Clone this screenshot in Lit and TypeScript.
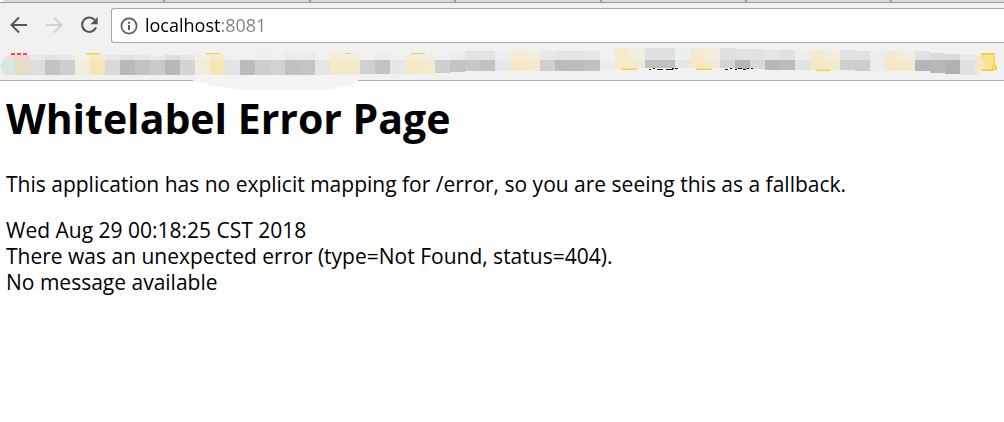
import { LitElement, html, svg, css } from "lit";
import { customElement } from "lit/decorators.js";

// [x, top edge, bottom edge, upper colour, lower colour]; each tile is 15 wide
type Tile = [number, number, number, string, string];

const TILES: Tile[] = [
  [0, 55, 75, "#f0dfdd", "#d9e8de"],
  [15, 55, 75, "#f2d6d5", "#e5dcc4"],
  [30, 55, 75, "#eaeaea", "#dddddb"],
  [45, 55, 75, "#e3e3e3", "#c3c3c1"],
  [60, 55, 75, "#e7e9e9", "#cccfce"],
  [75, 55, 75, "#f3f0e6", "#f2eddb"],
  [90, 55, 75, "#f4ebcd", "#f5e7b3"],
  [105, 55, 75, "#e9e9e8", "#dadad8"],
  [120, 55, 75, "#e3e3e3", "#b8b9b8"],
  [135, 55, 75, "#e6e7e6", "#c2c4c2"],
  [150, 56, 75, "#e9e8e7", "#cccac7"],
  [165, 55, 75, "#dddedf", "#b4b9ba"],
  [180, 55, 75, "#e4e7e8", "#d3d5d4"],
  [195, 55, 75, "#f2efe3", "#f2ecda"],
  [210, 54, 75, "#f4ebcd", "#f5e6b3"],
  [225, 55, 75, "#f0f0f0", "#e4e2e2"],
  [240, 55, 75, "#f0f0f0", "#bfbbbc"],
  [255, 53, 75, "#eeefee", "#cdcfcd"],
  [270, 55, 75, "#f0f0f0", "#d1d3d2"],
  [285, 52, 75, "#ececec", "#c1c1c0"],
  [300, 52, 75, "#ebebea", "#c5c4c1"],
  [315, 55, 75, "#f0f0f0", "#e5e5e5"],
  [330, 52, 75, "#f3edd6", "#f3ebc8"],
  [345, 54, 75, "#f2efde", "#f1e9c9"],
  [360, 55, 74, "#f0f0f0", "#d0d0cf"],
  [375, 54, 74, "#ededee", "#c3c3c1"],
  [390, 55, 74, "#f0f0f0", "#e5e8ea"],
  [405, 54, 74, "#f4edd6", "#f6e8c4"],
  [420, 54, 74, "#f1eedf", "#f1ebd0"],
  [435, 55, 73, "#f0f0f0", "#cfcfcf"],
  [450, 52, 72, "#ebebec", "#c3c3c1"],
  [465, 51, 71, "#e2e3e2", "#c5c8c4"],
  [480, 51, 71, "#e3e3e3", "#c2c3bf"],
  [495, 51, 71, "#ecedee", "#e4e6e8"],
  [510, 51, 71, "#f4ebd1", "#f6e8c3"],
  [525, 51, 71, "#f1eedd", "#f2ebcd"],
  [540, 51, 71, "#e9e9e9", "#d4cfcb"],
  [555, 51, 71, "#e4e4e5", "#b9bbbd"],
  [570, 51, 71, "#e4e4e3", "#babebb"],
  [585, 51, 71, "#e6e6e8", "#c1c0c5"],
  [600, 60, 70, "#f0f0f0", "#ececec"],
  [615, 48, 69, "#f4ead0", "#f6e9c4"],
  [630, 48, 68, "#f1eedd", "#f2ead0"],
  [645, 48, 68, "#e0e0e0", "#bfc1bd"],
  [660, 48, 68, "#e0e0e0", "#bfc1bd"],
  [675, 48, 68, "#ecefef", "#e3e5e6"],
  [690, 48, 68, "#f4ead0", "#f6e8c3"],
  [705, 48, 68, "#f1eedc", "#f2ead0"],
  [720, 48, 68, "#e0e0e0", "#d4d4d4"],
  [735, 49, 69, "#e1e1e1", "#b4b6b0"],
  [750, 49, 69, "#e2e2e2", "#d8d8d8"],
  [765, 50, 70, "#e5e5e2", "#b6b6b5"],
  [780, 50, 70, "#e1e1e1", "#bbbbba"],
  [795, 50, 70, "#ebedee", "#e0e2e5"],
  [810, 50, 70, "#f4ead0", "#f6e8c4"],
  [825, 50, 70, "#f1eedd", "#f2ead0"],
  [840, 50, 70, "#e3e3e3", "#cececd"],
  [855, 51, 71, "#e1e1e0", "#cdcdcb"],
  [870, 51, 71, "#ebedee", "#eaecee"],
  [885, 51, 71, "#f4ead0", "#f6e8c3"],
  [900, 51, 71, "#f1eedd", "#f2ead0"],
  [915, 51, 71, "#e0e1e2", "#b7b4b5"],
  [930, 53, 73, "#dcdcdd", "#b8b8b8"],
  [945, 54, 74, "#dadada", "#b2b0b5"],
  [960, 55, 75, "#eaeaea", "#dfe1e6"],
];

const RED_MARKS = [11, 17, 23];
// [x, y, width] of the folder edges that show beside the tiles
const FOLDER_TOPS = [[86, 53, 14], [206, 53, 14], [344, 53, 7], [411, 53, 14]];
const FOLDER_BASES = [[621, 68, 16], [696, 68, 16], [816, 69, 15]];
const TEXT_BITS = [
  [649, 1, 2], [653, 0, 2], [657, 1, 6], [666, 1, 7], [672, 0, 2], [675, 0, 3],
  [725, 1, 3], [730, 0, 2], [735, 1, 2], [738, 0, 4], [743, 1, 3], [747, 0, 2], [751, 0, 2],
];

const tile = ([x, top, bottom, upper, lower]: Tile) => svg`
  <rect x=${x} y=${top} width="15" height=${Math.max(0, 60 - top)} fill=${upper} />
  <rect x=${x} y="60" width="15" height=${bottom - 60} fill=${lower} />`;

@customElement("bookmark-strip")
export class BookmarkStrip extends LitElement {
  static styles = css`
    :host {
      display: block;
      height: 35px;
      background: #f1f1f1;
      border-bottom: 1px solid #b1b1b1;
    }
    .art {
      display: block;
      width: 1004px;
      height: 46px;
      overflow: visible;
      position: relative;
      z-index: 1;
      pointer-events: none;
    }
  `;

  render() {
    return html`
      <svg class="art" viewBox="0 45 1004 46" aria-hidden="true" shape-rendering="crispEdges">
        <path
          fill="#f4f4f4"
          d="M193 75H360V78L357 81L354 84L348 86L340 87L335 89L329 90H243L225 88L212 86L203 83L193 81Z"
        />
        <clipPath id="left-end">
          <path d="M0 65l2-4 3-4 4-2h1000v25H9l-4-4-3-4z" />
          <path d="M30 45h974v30H30z" />
        </clipPath>
        ${RED_MARKS.map((x) => svg`<rect x=${x} y="53" width="4" height="2" fill="#fb4444" />`)}
        ${FOLDER_TOPS.map(
          ([x, y, w]) => svg`
            <rect x=${x} y=${y} width=${w} height="1" fill="#f1cd62" />
            <rect x=${x + 1} y=${y + 1} width=${w - 1} height="1" fill="#ffdf70" />`
        )}
        <g clip-path="url(#left-end)">${TILES.map(tile)}</g>
        ${FOLDER_BASES.map(
          ([x, y, w]) => svg`
            <rect x=${x} y=${y} width=${w} height="2" fill="#fddf70" />
            <rect x=${x + 1} y=${y + 1} width=${w - 2} height="1" fill="#eccb63" />`
        )}
        ${TEXT_BITS.map(
          ([x, dy, w]) => svg`<rect x=${x} y=${68 + dy} width=${w} height="1" fill="#15152a" />`
        )}
        <path fill="#fbd84f" d="M981 53h14v12h2v5h-3v1h-12l-1-1z" />
        <path fill="#ffe591" d="M983 55h10v9l-1 1v4h-9zM994 66h1v3h-1z" />
        <path fill="#eec44e" d="M982 53h12v1h-12zM983 70h10v1h-10zM995 65h1v5h-1z" />
        <path fill="#f3e6cb" d="M975 55l4 1 4 4 1 5-2 5-4 4-3 1z" />
      </svg>
    `;
  }
}

@customElement("browser-toolbar")
export class BrowserToolbar extends LitElement {
  static styles = css`
    :host {
      display: block;
      background: #f1f1f1;
    }
    .tabs {
      display: block;
      width: 100%;
      height: 3px;
      background: #dadada;
    }
    .bar {
      display: flex;
      align-items: center;
      gap: 13px;
      height: 34px;
      padding: 5px 0 3px 8px;
    }
    .tool {
      flex: none;
      width: 22px;
      height: 22px;
      padding: 0;
      border: 0;
      background: none;
    }
    .icon {
      display: block;
      flex: none;
      width: 22px;
      height: 22px;
    }
    .address {
      flex: 1;
      display: flex;
      align-items: center;
      gap: 5px;
      box-sizing: border-box;
      height: 35px;
      margin-left: -2px;
      padding-left: 6px;
      border: 1px solid #a8a8a8;
      border-right: 0;
      border-radius: 3px 0 0 3px;
      background: #fff;
    }
    .url {
      flex: 1;
      min-width: 0;
      height: 30px;
      padding: 0;
      border: 0;
      outline: 0;
      font: 18px "Open Sans", sans-serif;
      color: transparent;
      caret-color: #000;
      background: linear-gradient(90deg, #000 75px, #808080 75px);
      -webkit-background-clip: text;
      background-clip: text;
    }
  `;

  render() {
    return html`
      <svg class="tabs" aria-hidden="true">
        <path d="M0 0h3l1 2H0z" fill="#fff" />
        <path d="M0 2h5000v1H0z" fill="#999" />
        ${[163, 309, 454, 600, 745, 890].map(
          (x) => svg`<path d="M${x} 0h1l1 2h-1z" fill="#888" stroke="#999" />`
        )}
      </svg>
      <div class="bar">
        <button class="tool" aria-label="Back">
          <svg class="icon" viewBox="0 0 22 22" fill="none" stroke="#555" stroke-width="2">
            <path d="M19 11H4M11 3.5L3.5 11l7.5 7.5" />
          </svg>
        </button>
        <button class="tool" aria-label="Forward" disabled>
          <svg class="icon" viewBox="0 0 22 22" fill="none" stroke="#d2d2d2" stroke-width="2">
            <path d="M3 11h15M11 3.5l7.5 7.5-7.5 7.5" />
          </svg>
        </button>
        <button class="tool" aria-label="Reload">
          <svg class="icon" viewBox="0 0 22 22">
            <path
              d="M16.6 5.8A7.2 7.2 0 1 0 18 13.4"
              fill="none"
              stroke="#555"
              stroke-width="2.1"
            />
            <path d="M19.7 3v7.3h-7.3z" fill="#555" />
          </svg>
        </button>
        <label class="address">
          <svg class="icon" viewBox="0 0 22 22" role="img" aria-label="Site information">
            <circle cx="11" cy="12" r="7.6" fill="none" stroke="#5a5a5a" stroke-width="1.7" />
            <path d="M10 11h2v5h-2zM10 7.8h2v2h-2z" fill="#5a5a5a" />
          </svg>
          <input class="url" type="text" aria-label="Address" value="localhost:8081" spellcheck="false" />
        </label>
      </div>
    `;
  }
}

@customElement("app-root")
export class AppRoot extends LitElement {
  static styles = css`
    :host {
      display: block;
      min-height: 100vh;
      background: #fff;
      color: #000;
      overflow-x: clip;
    }
    .page {
      padding: 8px 6px;
      font: 21px/26px "Open Sans", sans-serif;
    }
    .title {
      margin: 0 0 24px;
      font-size: 41px;
      line-height: 58px;
    }
    .text {
      margin: 0 0 20px;
    }
  `;

  render() {
    return html`
      <browser-toolbar></browser-toolbar>
      <bookmark-strip></bookmark-strip>
      <main class="page">
        <h1 class="title">Whitelabel Error Page</h1>
        <p class="text">
          This application has no explicit mapping for /error, so you are seeing this as a fallback.
        </p>
        <div>Wed Aug 29 00:18:25 CST 2018</div>
        <div>There was an unexpected error (type=Not Found, status=404).</div>
        <div>No message available</div>
      </main>
    `;
  }
}
